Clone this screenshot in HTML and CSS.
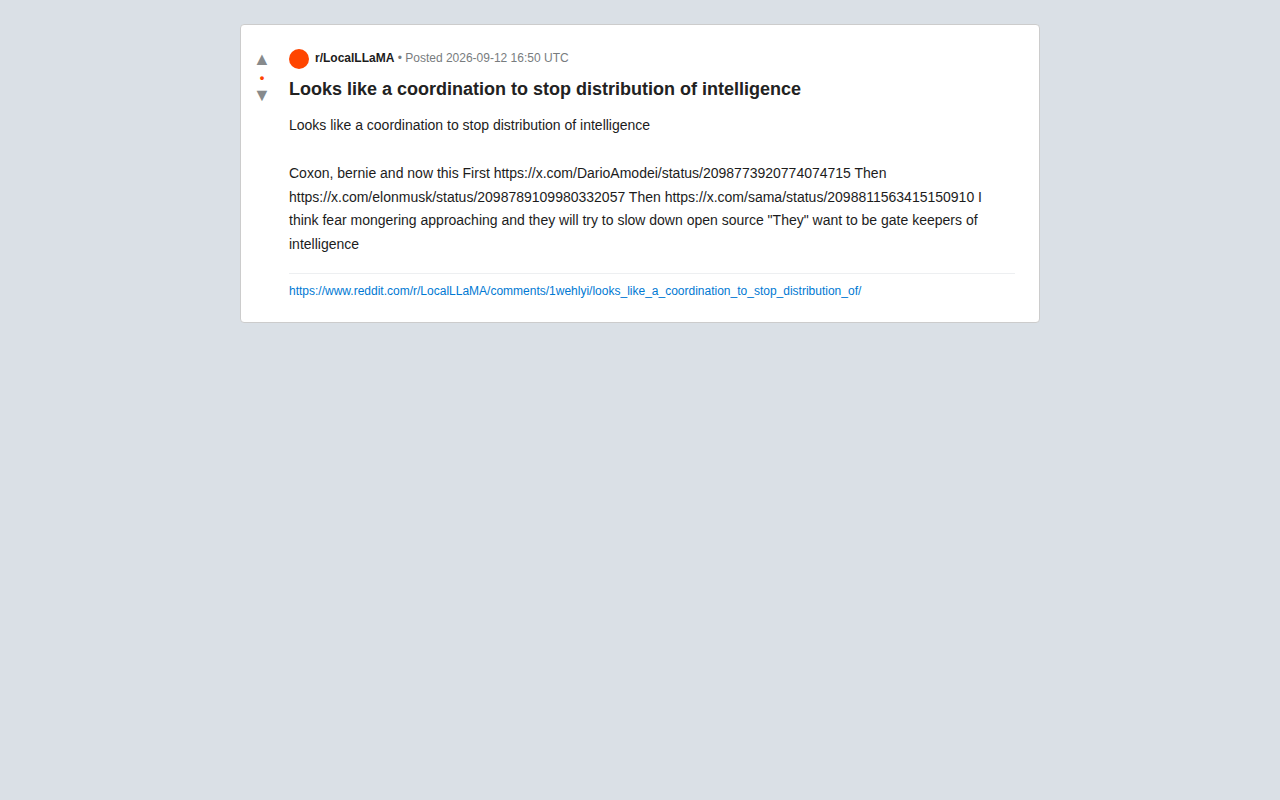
FILE: index.html
```html
<!DOCTYPE html>
<html lang="en">
<head>
<meta charset="utf-8">
<title>r/LocalLLaMA</title>
<link rel="stylesheet" href="styles.css">
</head>
<body>
<article class="post">
  <div class="votes">
    <button class="arrow" type="button" aria-label="Upvote">▲</button>
    <span class="score">•</span>
    <button class="arrow" type="button" aria-label="Downvote">▼</button>
  </div>
  <div class="content">
    <header class="meta">
      <span class="avatar"></span>
      <span><b class="sub">r/LocalLLaMA</b> • Posted 2026-09-12 16:50 UTC</span>
    </header>
    <h1 class="title">Looks like a coordination to stop distribution of intelligence</h1>
    <div class="text">
      <p class="para">Looks like a coordination to stop distribution of intelligence</p>
      <p class="para">Coxon, bernie and now this First https://x.com/DarioAmodei/status/2098773920774074715 Then https://x.com/elonmusk/status/2098789109980332057 Then https://x.com/sama/status/2098811563415150910 I think fear mongering approaching and they will try to slow down open source "They" want to be gate keepers of intelligence</p>
    </div>
    <footer class="source"><a class="link" href="https://www.reddit.com/r/LocalLLaMA/comments/1wehlyi/looks_like_a_coordination_to_stop_distribution_of/">https://www.reddit.com/r/LocalLLaMA/comments/1wehlyi/looks_like_a_coordination_to_stop_distribution_of/</a></footer>
  </div>
</article>
</body>
</html>
```
FILE: styles.css
```css
* {
  box-sizing: border-box;
}

body {
  margin: 0;
  padding: 24px;
  background: #dae0e6;
  color: #1c1c1c;
  font-family: "Liberation Sans", Arial, sans-serif;
}

.post {
  display: flex;
  max-width: 800px;
  margin: 0 auto;
  background: #fff;
  border: 1px solid #ccc;
  border-radius: 4px;
}

.votes {
  display: flex;
  flex: 0 0 40px;
  flex-direction: column;
  align-items: center;
  padding: 24px 0 0 2px;
}

.arrow {
  padding: 0;
  border: 0;
  background: none;
  color: #878a8c;
  font-family: inherit;
  font-size: 18px;
  line-height: 21px;
  cursor: pointer;
}

.score {
  color: #ff4500;
  font-size: 13px;
  font-weight: 700;
  line-height: 15px;
}

.content {
  flex: 1;
  min-width: 0;
  padding: 24px 24px 24px 8px;
}

.meta {
  display: flex;
  gap: 6px;
  color: #787c7e;
  font-size: 12px;
  line-height: 18px;
}

.avatar {
  width: 20px;
  height: 20px;
  border-radius: 50%;
  background: #ff4500;
}

.sub {
  color: #1c1c1c;
}

.title {
  margin: 8px 0 12px;
  color: #222;
  font-size: 18px;
  line-height: 25px;
}

.text {
  display: grid;
  gap: 24px;
  font-size: 14px;
  line-height: 1.7;
}

.para {
  margin: 0;
}

.source {
  margin-top: 16px;
  padding-top: 10px;
  border-top: 1px solid #edeff1;
  font-size: 12px;
  line-height: 14px;
}

.link {
  color: #0079d3;
  text-decoration: none;
  overflow-wrap: anywhere;
}
```
